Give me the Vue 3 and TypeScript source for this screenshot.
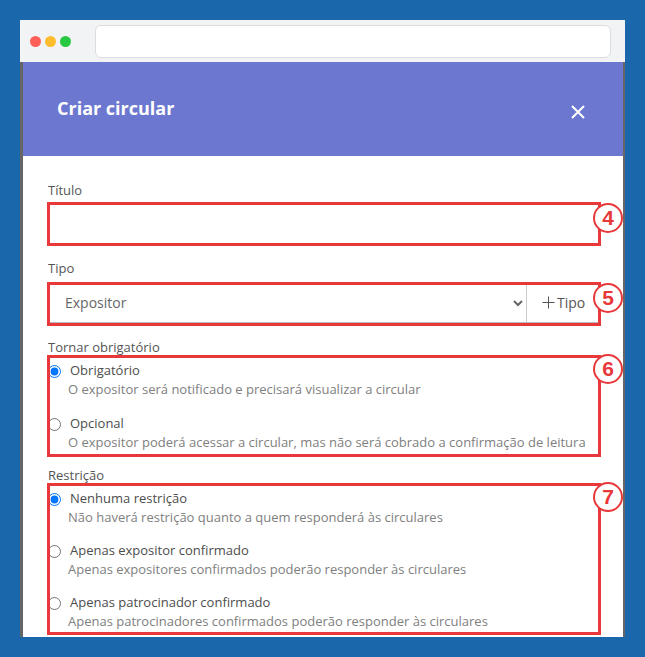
<script setup lang="ts">
interface Opt { name: string; desc: string; checked?: boolean }
const obrig: Opt[] = [
  { name: 'Obrigatório', desc: 'O expositor será notificado e precisará visualizar a circular', checked: true },
  { name: 'Opcional', desc: 'O expositor poderá acessar a circular, mas não será cobrado a confirmação de leitura' },
]
const restr: Opt[] = [
  { name: 'Nenhuma restrição', desc: 'Não haverá restrição quanto a quem responderá às circulares', checked: true },
  { name: 'Apenas expositor confirmado', desc: 'Apenas expositores confirmados poderão responder às circulares' },
  { name: 'Apenas patrocinador confirmado', desc: 'Apenas patrocinadores confirmados poderão responder às circulares' },
]
</script>

<template>
  <div class="page">
    <div class="window">
      <div class="toolbar">
        <span class="dot red"></span>
        <span class="dot yellow"></span>
        <span class="dot green"></span>
        <div class="address"></div>
      </div>
      <div class="modal">
        <header class="head">
          <h1>Criar circular</h1>
          <svg class="close" width="14" height="14" viewBox="0 0 14 14" aria-label="Fechar">
            <path d="M1 1 13 13M13 1 1 13" stroke="#fff" stroke-width="2" fill="none" />
          </svg>
        </header>
        <div class="body">
          <label class="lbl lbl-titulo">Título</label>
          <div class="field f-titulo">
            <input class="input" type="text" />
            <span class="frame"></span>
            <span class="badge">4</span>
          </div>

          <label class="lbl lbl-tipo">Tipo</label>
          <div class="field f-tipo">
            <select class="select"><option>Expositor</option></select>
            <button class="add" type="button">
              <svg width="13" height="13" viewBox="0 0 13 13"><path d="M6.5 0.5v12M0.5 6.5h12" stroke="#555" stroke-width="1" fill="none" /></svg>
              <span>Tipo</span>
            </button>
            <span class="frame"></span>
            <span class="badge">5</span>
          </div>

          <label class="lbl lbl-obrig">Tornar obrigatório</label>
          <div class="group g-obrig">
            <label v-for="o in obrig" :key="o.name" class="opt">
              <span class="opt-line">
                <input type="radio" name="obrig" :checked="o.checked" />
                <span class="opt-name">{{ o.name }}</span>
              </span>
              <span class="opt-desc">{{ o.desc }}</span>
            </label>
            <span class="frame"></span>
            <span class="badge">6</span>
          </div>

          <label class="lbl lbl-restr">Restrição</label>
          <div class="group g-restr">
            <label v-for="o in restr" :key="o.name" class="opt">
              <span class="opt-line">
                <input type="radio" name="restr" :checked="o.checked" />
                <span class="opt-name">{{ o.name }}</span>
              </span>
              <span class="opt-desc">{{ o.desc }}</span>
            </label>
            <span class="frame"></span>
            <span class="badge">7</span>
          </div>
        </div>
      </div>
    </div>
  </div>
</template>

<style>
html, body { margin: 0; background: #1a67ac; }
</style>

<style scoped>
.page {
  width: 645px;
  height: 657px;
  padding: 20px;
  box-sizing: border-box;
  background: #1a67ac;
  font-family: "Open Sans", sans-serif;
  overflow: hidden;
}
.window {
  height: 617px;
  display: flex;
  flex-direction: column;
  overflow: hidden;
}
.toolbar {
  height: 42px;
  flex: none;
  background: #f2f3f5;
  display: flex;
  align-items: center;
  padding: 0 14px 0 10px;
  box-sizing: border-box;
  gap: 4px;
}
.dot { width: 11px; height: 11px; border-radius: 50%; flex: none; }
.red { background: #ff5f57; }
.yellow { background: #ffbd2e; }
.green { background: #28c940; }
.address {
  flex: 1;
  margin-left: 20px;
  height: 33px;
  box-sizing: border-box;
  background: #fff;
  border: 1px solid #dcdde0;
  border-radius: 6px;
}
.modal {
  flex: 1;
  min-height: 0;
  background: #fff;
  border-left: 3px solid #666;
  border-right: 2px solid #666;
}
.head {
  height: 94px;
  box-sizing: border-box;
  background: #6c77d0;
  display: flex;
  justify-content: space-between;
  padding: 34px 38px 0 34px;
}
.head h1 {
  margin: 0;
  font-size: 18px;
  line-height: 24px;
  font-weight: 700;
  color: #fff;
}
.close { margin-top: 9px; }
.body {
  padding: 0 0 0 25px;
  color: #555;
}
.lbl {
  display: block;
  font-size: 13px;
  line-height: 18px;
  color: #555;
}
.lbl-titulo { margin-top: 25px; }
.lbl-tipo { margin-top: 16px; }
.lbl-obrig { margin-top: 15px; }
.lbl-restr { margin-top: 10px; }
.field, .group {
  position: relative;
  width: 551px;
  box-sizing: border-box;
}
.f-titulo { margin-top: 6px; height: 38px; }
.f-tipo { margin-top: 8px; height: 38px; display: flex; border-bottom: 1px solid #bbb; }
.f-tipo .frame { bottom: -4px; }
.input {
  width: 100%;
  height: 100%;
  box-sizing: border-box;
  border: 0;
  outline: 0;
  background: #fff;
}
.select {
  flex: 1;
  min-width: 0;
  height: 100%;
  border: 0;
  border-right: 1px solid #ccc;
  background: #fff;
  padding: 0 0 2px 13px;
  font: 14px "Open Sans", sans-serif;
  color: #666;
  outline: 0;
}
.add {
  flex: none;
  width: 72px;
  border: 0;
  background: #fff;
  display: flex;
  align-items: center;
  justify-content: flex-start;
  gap: 2px;
  padding: 0 0 2px 15px;
  font: 14px "Open Sans", sans-serif;
  color: #555;
}
.group { margin-top: 0; padding: 6px 0 0; display: flex; flex-direction: column; gap: 15px; }
.g-obrig { height: 100px; gap: 16px; }
.g-restr { height: 150px; }
.opt { display: flex; flex-direction: column; height: 37px; }
.opt-line { display: flex; align-items: center; height: 18px; }
.opt-line input {
  width: 13px;
  height: 13px;
  margin: 0 8px 0 0;
  flex: none;
}
.opt-name { font-size: 13px; line-height: 16px; margin: 0 0 2px 1px; color: #4d4d4d; }
.opt-desc { font-size: 13px; line-height: 19px; color: #808080; margin-left: 20px; }
.frame {
  position: absolute;
  left: -1px;
  right: -2px;
  top: -3px;
  bottom: -3px;
  border: 3px solid #e8383a;
  pointer-events: none;
}
.g-obrig .frame, .g-restr .frame { top: -1px; bottom: -1px; }
.badge {
  position: absolute;
  top: -2px;
  right: -24px;
  width: 30px;
  height: 30px;
  box-sizing: border-box;
  border: 2.5px solid #e8383a;
  border-radius: 50%;
  background: #fff;
  color: #e8383a;
  font: 700 21px/25px "Liberation Sans", sans-serif;
  text-align: center;
}
</style>
